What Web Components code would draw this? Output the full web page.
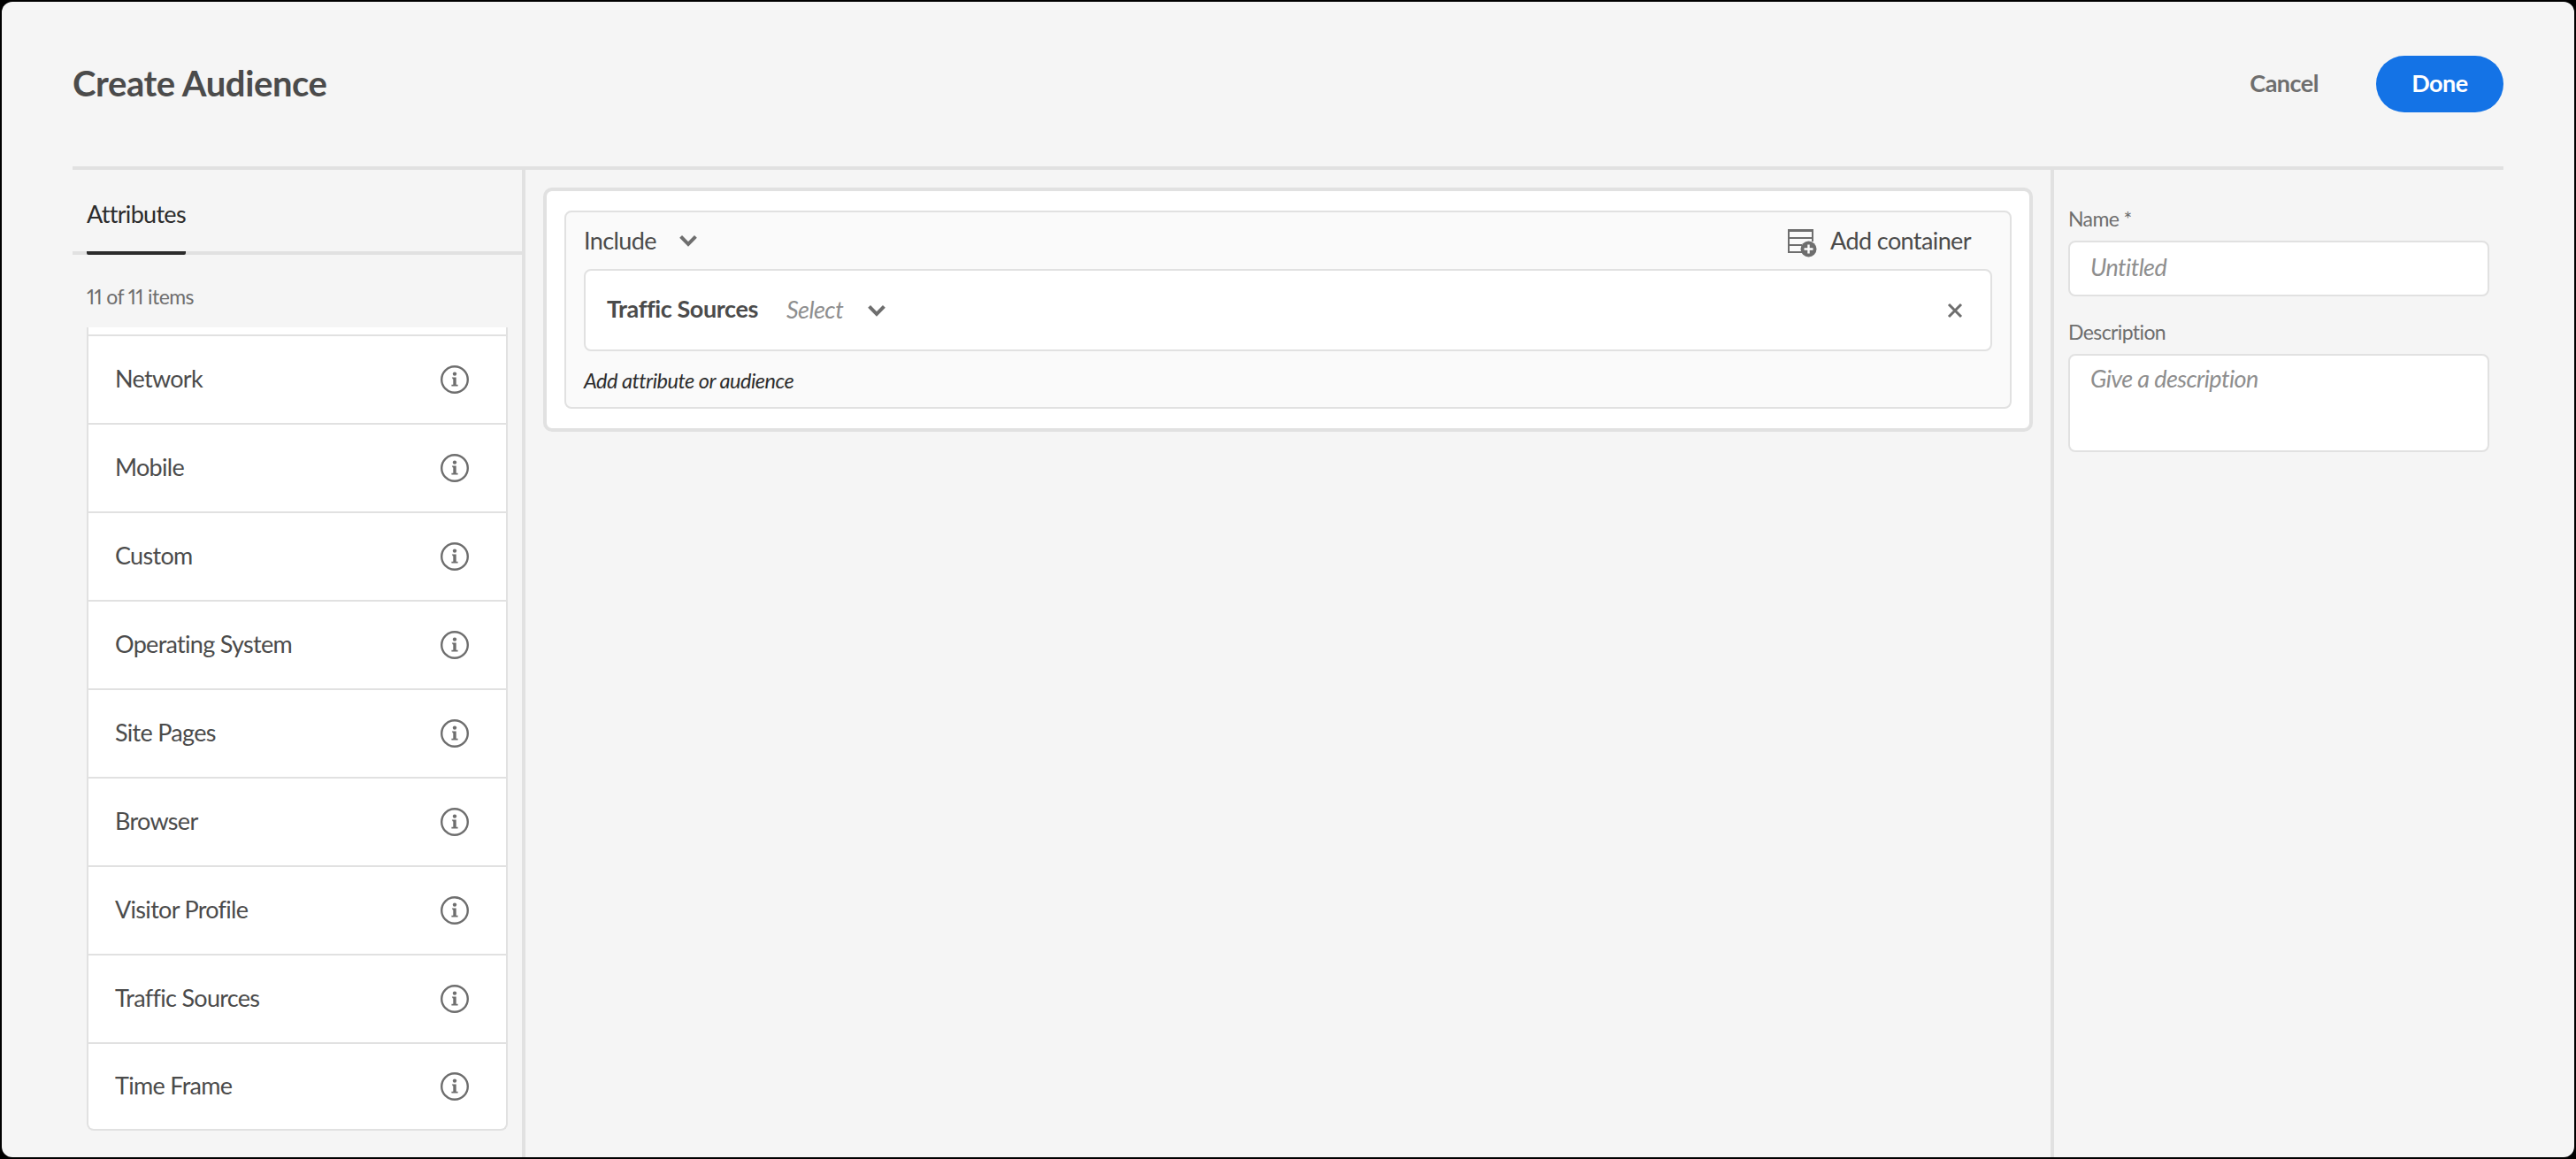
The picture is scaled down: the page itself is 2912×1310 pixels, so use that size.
<!DOCTYPE html>
<html lang="en"><head><meta charset="utf-8"><title>Create Audience</title>
<style>
html,body{margin:0;padding:0;height:100%;background:#000;overflow:hidden}
body{font-family:"Lato","Noto Sans",sans-serif;color:#4b4b4b}
</style></head><body>
<audience-app>
  <audience-header slot="header" title-text="Create Audience"></audience-header>
  <attribute-panel slot="left">
    <attribute-item>Network</attribute-item>
    <attribute-item>Mobile</attribute-item>
    <attribute-item>Custom</attribute-item>
    <attribute-item>Operating System</attribute-item>
    <attribute-item>Site Pages</attribute-item>
    <attribute-item>Browser</attribute-item>
    <attribute-item>Visitor Profile</attribute-item>
    <attribute-item>Traffic Sources</attribute-item>
    <attribute-item>Time Frame</attribute-item>
  </attribute-panel>
  <rule-builder slot="center"></rule-builder>
  <details-form slot="right"></details-form>
</audience-app>
<script>
const ICONS={
 chevron:'<svg width="20" height="14" viewBox="0 0 20 14"><path d="M1.6 2.4 L10 11 L18.4 2.4" fill="none" stroke="#6e6e6e" stroke-width="4"/></svg>',
 info:'<svg width="32" height="32" viewBox="0 0 32 32"><circle cx="16" cy="16" r="14.8" fill="none" stroke="#6e6e6e" stroke-width="2.4"/><circle cx="16" cy="9.6" r="2.2" fill="#6e6e6e"/><path d="M12.8 13.6h4.9v8.1h1.9v1.9h-7.2v-1.9h1.9v-6.2h-.5z" fill="#6e6e6e"/></svg>',
 close:'<svg width="18" height="18" viewBox="0 0 18 18"><path d="M2 2 L16 16 M16 2 L2 16" stroke="#6e6e6e" stroke-width="3" fill="none"/></svg>',
 addbox:'<svg width="33" height="32" viewBox="0 0 33 32"><path d="M1 1h27v9H1zM1 10v16h15M1 18h15" fill="none" stroke="#6e6e6e" stroke-width="2"/><rect x="1" y="1" width="27" height="2" fill="#6e6e6e"/><path d="M28 10v4" stroke="#6e6e6e" stroke-width="2"/><circle cx="23.5" cy="22.5" r="9" fill="#6e6e6e"/><path d="M23.5 17.5v10M18.5 22.5h10" stroke="#fff" stroke-width="2.4"/></svg>'
};
function def(name,css,html){
 customElements.define(name,class extends HTMLElement{
  connectedCallback(){
   if(this.shadowRoot)return;
   const r=this.attachShadow({mode:'open'});
   r.innerHTML='<style>'+css+'</style>'+(typeof html==='function'?html(this):html);
  }
 });
}
def('ui-icon',':host{display:inline-flex;line-height:0;flex:none}',h=>ICONS[h.getAttribute('name')]);
def('audience-app',
 `:host{display:flex;flex-direction:column;box-sizing:border-box;height:1306px;margin:2px;background:#f5f5f5;border-radius:12px;overflow:hidden;padding:0 80px}
  .body{flex:1;display:flex;min-height:0}
  .left{flex:none;width:512px;box-sizing:border-box;border-right:4px solid #e1e1e1}
  .center{flex:1;min-width:0}
  .right{flex:none;width:512px;box-sizing:border-box;border-left:4px solid #e1e1e1}`,
 `<slot name="header"></slot><div class="body"><div class="left"><slot name="left"></slot></div><div class="center"><slot name="center"></slot></div><div class="right"><slot name="right"></slot></div></div>`);
def('audience-header',
 `:host{display:flex;align-items:center;justify-content:space-between;box-sizing:border-box;height:190px;border-bottom:4px solid #e1e1e1}
  h1{margin:0 0 2px;font:700 40px/48px Lato,sans-serif;color:#4b4b4b;letter-spacing:-.4px}
  .acts{display:flex;align-items:center;gap:65px}
  .cancel{font:700 27px/36px Lato,sans-serif;letter-spacing:-.5px;color:#6e6e6e;padding-bottom:2px}
  .done{display:flex;align-items:center;justify-content:center;box-sizing:border-box;width:144px;height:64px;padding-bottom:2px;border-radius:32px;background:#1473e6;color:#fff;font:700 27px/36px Lato,sans-serif;letter-spacing:-.5px}`,
 h=>`<h1>${h.getAttribute('title-text')}</h1><div class="acts"><span class="cancel">Cancel</span><span class="done">Done</span></div>`);
def('attribute-panel',
 `:host{display:block}
  .tabs{height:92px;border-bottom:4px solid #e1e1e1;padding-left:16px;display:flex}
  .tab{box-sizing:border-box;height:96px;padding-top:32px;font:400 27px/36px Lato,sans-serif;letter-spacing:-.7px;color:#2c2c2c;border-bottom:4px solid #2c2c2c;border-radius:0 0 2px 2px}
  .count{margin:31px 16px 19px;font:400 23px/32px Lato,sans-serif;font-variant-numeric:proportional-nums;letter-spacing:-.6px;color:#6e6e6e}
  .list{margin:0 16px;box-sizing:border-box;background:#fff;border:2px solid #e1e1e1;border-top:0;border-radius:0 0 8px 8px;padding-top:8px;overflow:hidden}`,
 `<div class="tabs"><div class="tab">Attributes</div></div><div class="count">11 of 11 items</div><div class="list"><slot></slot></div>`);
def('attribute-item',
 `:host{display:flex;align-items:center;justify-content:space-between;box-sizing:border-box;height:100px;border-top:2px solid #e1e1e1;padding:0 42px 0 30px;font:400 27px/36px Lato,sans-serif;letter-spacing:-.7px;color:#4b4b4b}
  :host(:last-child){height:98px}
  span{padding-bottom:3px}`,
 `<span><slot></slot></span><ui-icon name="info"></ui-icon>`);
def('rule-builder',
 `:host{display:block;padding:20px}
  .card{background:#fff;border:4px solid #e1e1e1;border-radius:10px;padding:22px 20px}
  .box{background:#fafafa;border:2px solid #e1e1e1;border-radius:8px;padding:0 20px 12px}
  .head{height:64px;display:flex;align-items:center;justify-content:space-between;font:400 27px/36px Lato,sans-serif;letter-spacing:-.6px;color:#4b4b4b}
  .inc{display:flex;align-items:center;gap:26px}
  .inc,.add{padding-bottom:1px}
  .add{display:flex;align-items:center;gap:15px;padding-right:24px}
  .add ui-icon{position:relative;top:3px}
  .row{box-sizing:border-box;height:93px;display:flex;align-items:center;background:#fff;border:2px solid #e1e1e1;border-radius:8px;padding:0 32px 0 24px}
  b{font:700 27px/36px Lato,sans-serif;letter-spacing:-.4px;color:#4b4b4b;margin-right:32px;padding-bottom:3px}
  .sel{font:italic 400 27px/36px Lato,sans-serif;letter-spacing:-.5px;color:#8e8e8e;margin-right:28px;padding-bottom:1px}
  .x{margin-left:auto;margin-right:-1px}
  .foot{margin-top:17px;padding-bottom:2px;font:italic 400 23.5px/32px Lato,sans-serif;letter-spacing:-.5px;color:#2c2c2c}`,
 `<div class="card"><div class="box">
   <div class="head"><span class="inc">Include<ui-icon name="chevron"></ui-icon></span><span class="add"><ui-icon name="addbox"></ui-icon>Add container</span></div>
   <div class="row"><b>Traffic Sources</b><span class="sel">Select</span><ui-icon name="chevron"></ui-icon><ui-icon class="x" name="close"></ui-icon></div>
   <div class="foot">Add attribute or audience</div>
  </div></div>`);
def('details-form',
 `:host{display:block;padding:39px 16px 0}
  label{display:block;font:400 23px/32px Lato,sans-serif;letter-spacing:-.6px;color:#6e6e6e;margin-bottom:9px}
  .f{box-sizing:border-box;background:#fff;border:2px solid #e1e1e1;border-radius:8px;padding:0 23px;font:italic 400 27px/36px Lato,sans-serif;letter-spacing:-.6px;color:#8e8e8e}
  .in{height:63px;display:flex;align-items:center;padding-bottom:3px;margin-bottom:24px}
  .ta{height:111px;padding-top:8px}`,
 `<label>Name *</label><div class="f in">Untitled</div><label>Description</label><div class="f ta">Give a description</div>`);
</script>
</body></html>
